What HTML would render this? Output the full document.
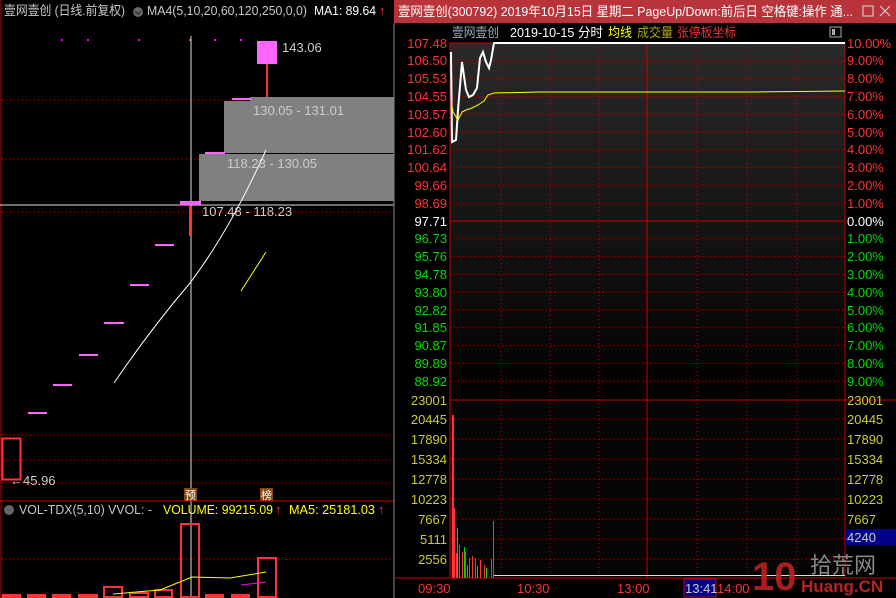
<!DOCTYPE html><html><head><meta charset="utf-8"><style>
body{margin:0;width:896px;height:598px;background:#000;overflow:hidden;font-family:"Liberation Sans","Noto Sans CJK SC",sans-serif}
svg{display:block;font-size:12px}
text{font-family:"Liberation Sans","Noto Sans CJK SC",sans-serif}
</style></head><body>
<svg width="896" height="598" viewBox="0 0 896 598">
<defs><linearGradient id="g" x1="0" y1="0" x2="0" y2="1"><stop offset="0" stop-color="#2a2a2a"/><stop offset="1" stop-color="#000"/></linearGradient></defs>
<rect x="0" y="0" width="394" height="598" fill="#000"/>
<line x1="1" y1="0" x2="1" y2="598" stroke="#c00" stroke-width="1"/>
<text x="4" y="15" fill="#c8c8c8" font-size="13" textLength="121" lengthAdjust="spacingAndGlyphs">壹网壹创 (日线.前复权)</text>
<circle cx="138" cy="12" r="5" fill="#666"/><path d="M135 11l3 3 3-3" stroke="#222" fill="none"/>
<text x="147" y="15" fill="#c8c8c8" font-size="13" textLength="160" lengthAdjust="spacingAndGlyphs">MA4(5,10,20,60,120,250,0,0)</text>
<text x="314" y="15" fill="#fff" font-size="13" textLength="62" lengthAdjust="spacingAndGlyphs">MA1: 89.64</text>
<text x="379" y="15" fill="#f33" font-size="13">↑</text>
<g fill="#f0f"><rect x="61" y="39" width="2" height="2"/><rect x="87" y="39" width="2" height="2"/><rect x="138" y="39" width="2" height="2"/><rect x="189" y="39" width="2" height="2"/><rect x="214" y="39" width="2" height="2"/><rect x="240" y="39" width="2" height="2"/></g>
<g stroke="#c00" stroke-dasharray="1,3"><line x1="2" y1="100" x2="393" y2="100"/><line x1="2" y1="159" x2="393" y2="159"/><line x1="2" y1="212" x2="393" y2="212"/><line x1="2" y1="435" x2="393" y2="435"/><line x1="2" y1="460" x2="393" y2="460"/><line x1="2" y1="483" x2="393" y2="483"/><line x1="2" y1="559" x2="393" y2="559"/></g>
<rect x="250" y="97" width="144" height="4" fill="#808080"/>
<rect x="224" y="101" width="170" height="52" fill="#808080"/>
<rect x="199" y="154" width="195" height="47" fill="#808080"/>
<text x="253" y="115" fill="#ccc" font-size="13">130.05 - 131.01</text>
<text x="227" y="168" fill="#ccc" font-size="13">118.23 - 130.05</text>
<line x1="0" y1="205" x2="394" y2="205" stroke="#ddd"/>
<line x1="191" y1="36" x2="191" y2="598" stroke="#ddd"/>
<text x="202" y="216" fill="#ccc" font-size="13">107.48 - 118.23</text>
<rect x="257" y="41" width="20" height="23" fill="#f6f"/>
<line x1="267" y1="64" x2="267" y2="97" stroke="#f33" stroke-width="2"/>
<text x="282" y="52" fill="#ccc" font-size="13">143.06</text>
<line x1="190" y1="206" x2="190" y2="236" stroke="#f33" stroke-width="2"/>
<g stroke="#f6f" stroke-width="2"><line x1="28" y1="413" x2="47" y2="413"/><line x1="53" y1="385" x2="72" y2="385"/><line x1="79" y1="355" x2="98" y2="355"/><line x1="104" y1="323" x2="124" y2="323"/><line x1="130" y1="285" x2="149" y2="285"/><line x1="155" y1="245" x2="174" y2="245"/><line x1="205" y1="153" x2="225" y2="153"/><line x1="232" y1="99" x2="251" y2="99"/></g>
<rect x="180" y="201" width="21" height="4" fill="#f6f"/>
<path d="M114 383 Q150 330 190 283 Q230 230 266 150" stroke="#fff" fill="none"/>
<line x1="241" y1="291" x2="266" y2="252" stroke="#ff0"/>
<rect x="2.5" y="438.5" width="18" height="41" fill="none" stroke="#f33" stroke-width="2"/>
<text x="10" y="485" fill="#ccc" font-size="13">←45.96</text>
<rect x="184" y="488" width="13" height="13" fill="#8b4513"/><text x="185" y="499" fill="#fff" font-size="11">预</text>
<rect x="260" y="488" width="13" height="13" fill="#8b4513"/><text x="261" y="499" fill="#fff" font-size="11">榜</text>
<line x1="0" y1="501" x2="394" y2="501" stroke="#c00"/>
<circle cx="9" cy="510" r="5" fill="#666"/>
<text x="19" y="514" fill="#c8c8c8" font-size="13" textLength="133" lengthAdjust="spacingAndGlyphs">VOL-TDX(5,10) VVOL: -</text>
<text x="163" y="514" fill="#ff0" font-size="13" textLength="110" lengthAdjust="spacingAndGlyphs">VOLUME: 99215.09</text><text x="275" y="514" fill="#f33" font-size="13">↑</text>
<text x="289" y="514" fill="#ff0" font-size="13" textLength="86" lengthAdjust="spacingAndGlyphs">MA5: 25181.03</text><text x="378" y="514" fill="#f33" font-size="13">↑</text>
<g fill="none" stroke="#f33" stroke-width="2"><rect x="181" y="524" width="18" height="73"/><rect x="258" y="558" width="18" height="39"/><rect x="104" y="587" width="18" height="10"/><rect x="155" y="590" width="17" height="7"/><rect x="130" y="593" width="18" height="4"/></g>
<g fill="#f33"><rect x="2" y="594" width="19" height="4"/><rect x="27" y="594" width="19" height="4"/><rect x="52" y="594" width="19" height="4"/><rect x="78" y="594" width="20" height="4"/><rect x="205" y="594" width="19" height="4"/><rect x="231" y="594" width="19" height="4"/></g>
<path d="M113 594 L160 590 L192 577 L230 578 L266 572" stroke="#ff0" fill="none"/>
<path d="M241 585 L266 582" stroke="#f0f" fill="none"/>
<rect x="394" y="0" width="502" height="598" fill="#000"/>
<rect x="394" y="0" width="502" height="23" fill="#b8343a"/>
<text x="398" y="16" fill="#fff" font-size="13" textLength="455" lengthAdjust="spacingAndGlyphs">壹网壹创(300792) 2019年10月15日 星期二 PageUp/Down:前后日 空格键:操作 通...</text>
<rect x="863" y="6" width="10" height="10" fill="none" stroke="#ddd"/>
<path d="M880 6l10 10M890 6l-10 10" stroke="#ddd"/>
<line x1="394" y1="23" x2="394" y2="598" stroke="#888"/>
<text x="452" y="37" fill="#9ab" font-size="13" textLength="47" lengthAdjust="spacingAndGlyphs">壹网壹创</text>
<text x="510" y="37" fill="#fff" font-size="13" textLength="93" lengthAdjust="spacingAndGlyphs">2019-10-15 分时</text>
<text x="608" y="37" fill="#ff0" font-size="13" textLength="24" lengthAdjust="spacingAndGlyphs">均线</text>
<text x="637" y="37" fill="#aa0" font-size="13" textLength="36" lengthAdjust="spacingAndGlyphs">成交量</text>
<text x="677" y="37" fill="#e33" font-size="13" textLength="59" lengthAdjust="spacingAndGlyphs">张停板坐标</text>
<rect x="830" y="27" width="11" height="10" fill="none" stroke="#aaa"/><rect x="832" y="29" width="3" height="6" fill="#aaa"/>
<rect x="450" y="43" width="395" height="357" fill="url(#g)"/>
<rect x="450" y="400" width="395" height="178" fill="#050505"/>
<g stroke="#c00" stroke-dasharray="1,3">
<line x1="501" y1="43" x2="501" y2="578"/><line x1="550" y1="43" x2="550" y2="578"/><line x1="599" y1="43" x2="599" y2="578"/><line x1="697" y1="43" x2="697" y2="578"/><line x1="747" y1="43" x2="747" y2="578"/><line x1="797" y1="43" x2="797" y2="578"/>
<line x1="450" y1="60.8" x2="845" y2="60.8"/><line x1="450" y1="78.6" x2="845" y2="78.6"/><line x1="450" y1="96.4" x2="845" y2="96.4"/><line x1="450" y1="114.2" x2="845" y2="114.2"/><line x1="450" y1="132" x2="845" y2="132"/><line x1="450" y1="149.8" x2="845" y2="149.8"/><line x1="450" y1="167.6" x2="845" y2="167.6"/><line x1="450" y1="185.4" x2="845" y2="185.4"/><line x1="450" y1="203.2" x2="845" y2="203.2"/>
<line x1="450" y1="238.8" x2="845" y2="238.8"/><line x1="450" y1="256.6" x2="845" y2="256.6"/><line x1="450" y1="274.4" x2="845" y2="274.4"/><line x1="450" y1="292.2" x2="845" y2="292.2"/><line x1="450" y1="310" x2="845" y2="310"/><line x1="450" y1="327.8" x2="845" y2="327.8"/><line x1="450" y1="345.6" x2="845" y2="345.6"/><line x1="450" y1="363.4" x2="845" y2="363.4"/><line x1="450" y1="381.2" x2="845" y2="381.2"/>
<line x1="450" y1="419" x2="845" y2="419"/><line x1="450" y1="439" x2="845" y2="439"/><line x1="450" y1="459" x2="845" y2="459"/><line x1="450" y1="479" x2="845" y2="479"/><line x1="450" y1="499" x2="845" y2="499"/><line x1="450" y1="519" x2="845" y2="519"/><line x1="450" y1="539" x2="845" y2="539"/><line x1="450" y1="559" x2="845" y2="559"/>
</g>
<g stroke="#c00"><line x1="450" y1="43" x2="450" y2="578"/><line x1="845" y1="43" x2="845" y2="578"/><line x1="647" y1="43" x2="647" y2="578"/><line x1="450" y1="221" x2="845" y2="221"/><line x1="450" y1="400" x2="896" y2="400"/><line x1="395" y1="578" x2="896" y2="578"/><line x1="450" y1="43" x2="494" y2="43"/></g>
<path d="M451 52 L452 142 L456 140 L458 110 L462 62 L466 90 L469 97 L473 95 L477 88 L480 58 L483 52 L486 62 L489 68 L491 60 L494 43 L845 43" stroke="#fff" stroke-width="2" fill="none"/>
<path d="M451 100 L453 112 L458 120 L462 112 L466 110 L472 108 L478 105 L484 101 L488 95 L494 93 L540 92 L747 92 L845 91" stroke="#ff0" fill="none"/>
<g fill="#f33"><rect x="452" y="415" width="2" height="163"/><rect x="453" y="508" width="2" height="70"/><rect x="459" y="545" width="1" height="33"/><rect x="462" y="552" width="1" height="26"/><rect x="465" y="552" width="1" height="26"/><rect x="469" y="558" width="1" height="20"/><rect x="472" y="556" width="1" height="22"/><rect x="475" y="558" width="1" height="20"/><rect x="480" y="560" width="1" height="18"/><rect x="484" y="565" width="1" height="13"/><rect x="491" y="559" width="1" height="19"/><rect x="493" y="521" width="1" height="57"/><rect x="456" y="553" width="1" height="25"/></g>
<g fill="#0d0"><rect x="457" y="528" width="1" height="50"/><rect x="464" y="547" width="1" height="31"/><rect x="467" y="565" width="1" height="13"/><rect x="477" y="566" width="1" height="12"/><rect x="486" y="568" width="1" height="10"/></g>
<rect x="494" y="575" width="351" height="1" fill="#ddd"/>
<g font-size="13" text-anchor="end">
<text x="447" y="48" fill="#f33">107.48</text><text x="447" y="65" fill="#f33">106.50</text><text x="447" y="83" fill="#f33">105.53</text><text x="447" y="101" fill="#f33">104.55</text><text x="447" y="119" fill="#f33">103.57</text><text x="447" y="137" fill="#f33">102.60</text><text x="447" y="154" fill="#f33">101.62</text><text x="447" y="172" fill="#f33">100.64</text><text x="447" y="190" fill="#f33">99.66</text><text x="447" y="208" fill="#f33">98.69</text>
<text x="447" y="226" fill="#fff">97.71</text>
<text x="447" y="243" fill="#0d0">96.73</text><text x="447" y="261" fill="#0d0">95.76</text><text x="447" y="279" fill="#0d0">94.78</text><text x="447" y="297" fill="#0d0">93.80</text><text x="447" y="315" fill="#0d0">92.82</text><text x="447" y="332" fill="#0d0">91.85</text><text x="447" y="350" fill="#0d0">90.87</text><text x="447" y="368" fill="#0d0">89.89</text><text x="447" y="386" fill="#0d0">88.92</text>
<text x="447" y="405" fill="#cc3">23001</text><text x="447" y="424" fill="#cc3">20445</text><text x="447" y="444" fill="#cc3">17890</text><text x="447" y="464" fill="#cc3">15334</text><text x="447" y="484" fill="#cc3">12778</text><text x="447" y="504" fill="#cc3">10223</text><text x="447" y="524" fill="#cc3">7667</text><text x="447" y="544" fill="#cc3">5111</text><text x="447" y="564" fill="#cc3">2556</text>
</g>
<g font-size="13">
<text x="847" y="48" fill="#f33">10.00%</text><text x="847" y="65" fill="#f33">9.00%</text><text x="847" y="83" fill="#f33">8.00%</text><text x="847" y="101" fill="#f33">7.00%</text><text x="847" y="119" fill="#f33">6.00%</text><text x="847" y="137" fill="#f33">5.00%</text><text x="847" y="154" fill="#f33">4.00%</text><text x="847" y="172" fill="#f33">3.00%</text><text x="847" y="190" fill="#f33">2.00%</text><text x="847" y="208" fill="#f33">1.00%</text>
<text x="847" y="226" fill="#fff">0.00%</text>
<text x="847" y="243" fill="#0d0">1.00%</text><text x="847" y="261" fill="#0d0">2.00%</text><text x="847" y="279" fill="#0d0">3.00%</text><text x="847" y="297" fill="#0d0">4.00%</text><text x="847" y="315" fill="#0d0">5.00%</text><text x="847" y="332" fill="#0d0">6.00%</text><text x="847" y="350" fill="#0d0">7.00%</text><text x="847" y="368" fill="#0d0">8.00%</text><text x="847" y="386" fill="#0d0">9.00%</text>
<text x="847" y="405" fill="#cc3">23001</text><text x="847" y="424" fill="#cc3">20445</text><text x="847" y="444" fill="#cc3">17890</text><text x="847" y="464" fill="#cc3">15334</text><text x="847" y="484" fill="#cc3">12778</text><text x="847" y="504" fill="#cc3">10223</text><text x="847" y="524" fill="#cc3">7667</text>
</g>
<rect x="845" y="529" width="51" height="16" fill="#00008b"/>
<text x="847" y="542" fill="#ccc" font-size="13">4240</text>
<text x="418" y="593" fill="#f33" font-size="13">09:30</text>
<text x="517" y="593" fill="#f33" font-size="13">10:30</text>
<text x="617" y="593" fill="#f33" font-size="13">13:00</text>
<rect x="684" y="579" width="32" height="18" fill="#00008b" stroke="#c00"/>
<text x="685" y="593" fill="#ccc" font-size="13">13:41</text>
<text x="717" y="593" fill="#f33" font-size="13">14:00</text>
<text x="752" y="590" fill="#b22" font-size="40" font-weight="bold" opacity="0.9">10</text>
<text x="810" y="573" fill="#888" font-size="22">拾荒网</text>
<text x="801" y="592" fill="#b22" font-size="17" font-weight="bold">Huang.CN</text>
</svg>
</body></html>
